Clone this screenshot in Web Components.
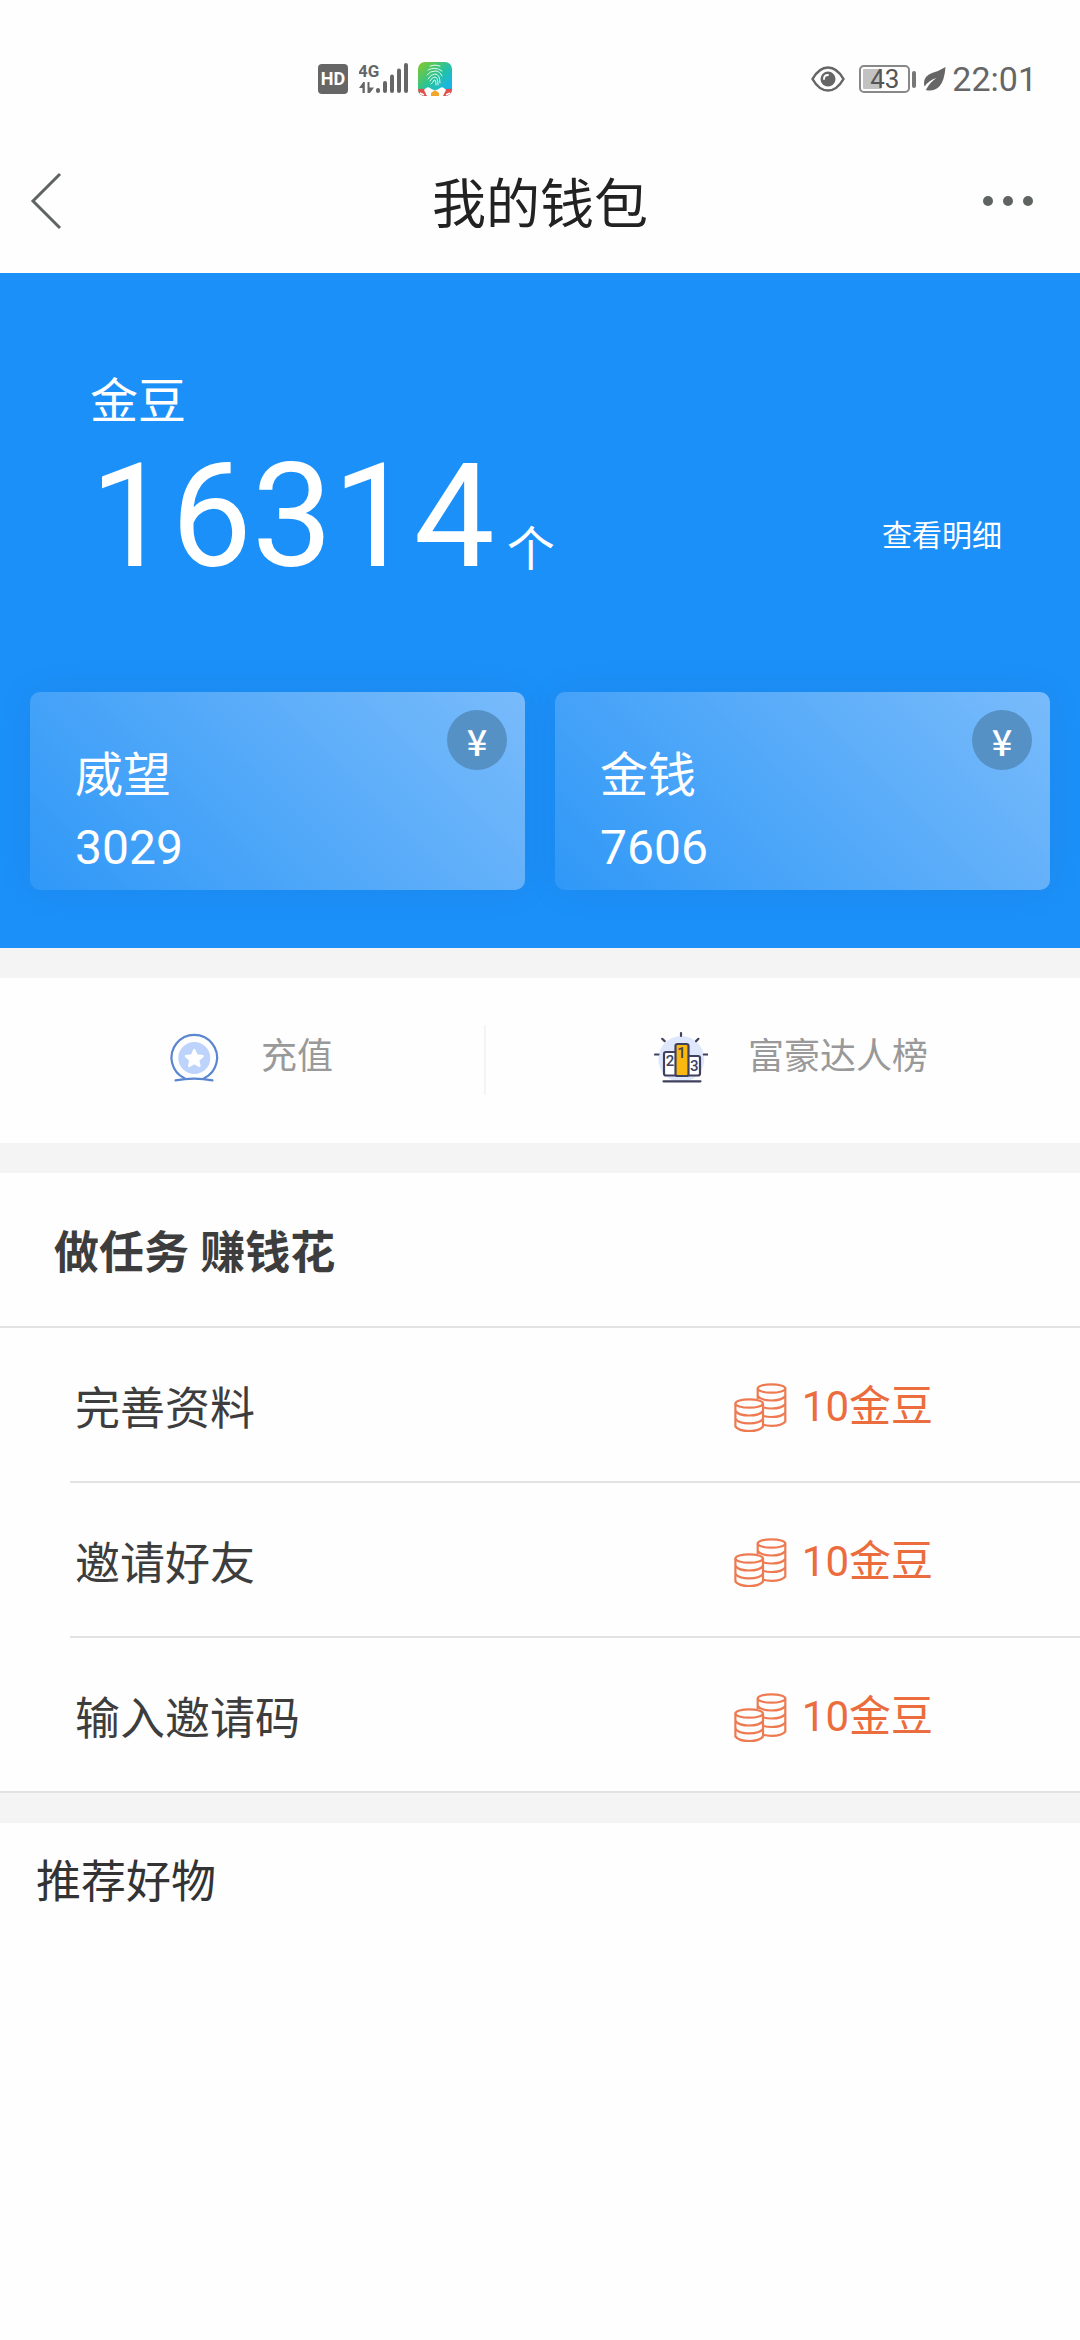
<!DOCTYPE html>
<html lang="zh-CN">
<head>
<meta charset="utf-8">
<meta name="viewport" content="width=device-width, initial-scale=1">
<title>我的钱包</title>
<style>
  body {
    margin: 0;
    background: #fefefe;
    color: #3d3d3d;
    font-family: Roboto, "Noto Sans CJK SC", sans-serif;
  }
</style>
</head>
<body>
<wallet-page>
  <status-bar time="22:01" battery="43"></status-bar>
  <nav-bar>我的钱包</nav-bar>

  <wallet-hero label="金豆" amount="16314" unit="个">
    <a slot="link" href="#detail">查看明细</a>
    <balance-card label="威望" value="3029"></balance-card>
    <balance-card label="金钱" value="7606"></balance-card>
  </wallet-hero>

  <quick-actions>
    <quick-action href="#recharge">
      <svg slot="icon" width="54" height="54" viewBox="0 0 54 54" fill="none" stroke="#5b86d0" stroke-width="2.2" stroke-linecap="round">
        <path d="M17.5 48.3A22.8 22.8 0 1 1 37.1 48.3"/>
        <path d="M8.5 50.3Q27.3 47 45.5 50.3"/>
        <circle cx="27.3" cy="28" r="16" fill="#bdd3fc" stroke="none"/>
        <path d="M27.3 20l2.5 5.4 5.9.7-4.4 4 1.2 5.9-5.2-2.9-5.2 2.9 1.2-5.9-4.4-4 5.9-.7z" fill="#fff" stroke="#fff" stroke-linejoin="round"/>
      </svg>
      充值
    </quick-action>
    <quick-action href="#rank">
      <svg slot="icon" width="54" height="54" viewBox="0 0 54 54" fill="none" stroke="#40415f" stroke-width="2.2" stroke-linecap="round">
        <circle cx="27.3" cy="29" r="23" fill="#dfe7fc" stroke="none"/>
        <rect x="10" y="22" width="14" height="23.5" rx="2" fill="#fff"/>
        <rect x="32" y="26" width="14" height="19.5" rx="2" fill="#fff"/>
        <rect x="21.5" y="14" width="13" height="32" rx="2" fill="#fbb80f"/>
        <path d="M9.5 51.3H46.5M27 3v3M8.2 8.8l2.5 2.3M44.4 8.8l-2.3 2.3M1 24.5h3.5M49.8 24.5h3.5"/>
        <g fill="#40415f" stroke="none" font-family="Roboto, sans-serif" font-weight="500" text-anchor="middle">
          <text x="16" y="36" font-size="15">2</text>
          <text x="27.5" y="28" font-size="15">1</text>
          <text x="40.3" y="41" font-size="15">3</text>
        </g>
      </svg>
      富豪达人榜
    </quick-action>
  </quick-actions>

  <task-list heading="做任务 赚钱花">
    <task-item reward="10金豆">完善资料</task-item>
    <task-item reward="10金豆">邀请好友</task-item>
    <task-item reward="10金豆">输入邀请码</task-item>
  </task-list>

  <goods-section>推荐好物</goods-section>
</wallet-page>

<script>
// clones the markup into an open shadow root
class BaseElement extends HTMLElement {
  constructor() {
    super();
    let template = document.createElement('template');
    template.innerHTML = this.render();
    this.attachShadow({mode: 'open'}).appendChild(template.content.cloneNode(true));
  }

  attr(name) {
    return this.getAttribute(name) || '';
  }
}

class WalletPage extends BaseElement {
  render() {
    return `
      <style>
      :host {
        display: flex;
        flex-direction: column;
        min-height: 100vh;
      }
      </style>
      <slot></slot>
    `;
  }
}

class StatusBar extends BaseElement {
  render() {
    return `
      <style>
      :host {
        display: flex;
        align-items: center;
        justify-content: space-between;
        height: 98px;
        padding: 30px 43px 0 318px;
        color: #666;
      }

      .group {
        display: flex;
        align-items: center;
      }

      .hd {
        width: 30px;
        border-radius: 4px;
        background: #666;
        color: #fff;
        font-size: 18px;
        font-weight: 700;
        line-height: 30px;
        text-align: center;
      }

      .signal {
        margin: 0 9px 0 11px;
      }

      .battery {
        box-sizing: border-box;
        width: 51px;
        height: 28px;
        margin: 0 2px 0 14px;
        padding: 2px;
        border: 2px solid #888;
        border-radius: 5px;
        background: linear-gradient(to right, #c2c2c2 ${this.attr('battery')}%, transparent 0) content-box;
        color: #555;
        font-size: 26px;
        line-height: 20px;
        text-align: center;
      }

      .tip {
        width: 4px;
        height: 17px;
        margin-right: 7px;
        border-radius: 2px;
        background: #777;
      }

      .time {
        margin-left: 6px;
        font-size: 34px;
        line-height: 40px;
      }
      </style>

      <div class="group">
        <span class="hd">HD</span>
        <svg class="signal" width="50" height="34" viewBox="0 0 50 34" fill="#666">
          <text x="-1" y="15" font-size="17" font-weight="700">4G</text>
          <path d="M0 26L4 20.5V20H5.8V31H3.5V26zM8.5 20h2v5.5H15L11 31H8.5z"/>
          <rect x="17" y="26" width="4" height="5" rx="2"/>
          <rect x="24" y="19" width="4" height="12" rx="2"/>
          <rect x="31" y="12.5" width="4" height="18.5" rx="2"/>
          <rect x="38" y="6.5" width="4" height="24.5" rx="2"/>
          <rect x="45" y="1" width="4" height="30" rx="2"/>
        </svg>
        <svg width="34" height="34" viewBox="0 0 34 34" fill="none">
          <defs>
            <linearGradient id="g" x1="0" y1="0" x2="1" y2="1">
              <stop offset=".1" stop-color="#74c83c"/>
              <stop offset=".5" stop-color="#25c2a0"/>
              <stop offset=".85" stop-color="#16b4ee"/>
            </linearGradient>
            <clipPath id="c"><rect width="34" height="34" rx="7"/></clipPath>
          </defs>
          <g clip-path="url(#c)">
            <rect width="34" height="34" fill="url(#g)"/>
            <path d="M0 27q5-1 9 1h16q5-2 9-1v7H0z" fill="#e2504b"/>
            <path d="M6 28q3-4 6-2 2 2 5 2t5-2q3-2 6 2l-3 6H9z" fill="#fff"/>
            <path d="M13 31l4-3 4 3v3h-8z" fill="#f4a62c"/>
            <path d="M2 31l4 2M32 31l-4 2" stroke="#fff" stroke-width="1.5"/>
            <g stroke="#dff8ef" stroke-linecap="round">
              <path d="M12 4q5-2 10 0M10 8q7-4 14 1M9 13q3-4 8-4 5 0 7 5M10 17q3-5 7-5 5 0 5 9M12 19q2-4 5-4 3 0 3 8M13 22q2-1 3-4 2-1 2 5"/>
            </g>
          </g>
        </svg>
      </div>

      <div class="group">
        <svg width="34" height="28" viewBox="0 0 34 28">
          <path d="M1.5 14Q8 2.5 17 2.5T32.5 14Q26 25.5 17 25.5T1.5 14z" fill="none" stroke="#666" stroke-width="2.5"/>
          <circle cx="17" cy="14" r="7.5" fill="#666"/>
          <path d="M13 14q0-4 4-4" fill="none" stroke="#fff" stroke-width="1.8" stroke-linecap="round"/>
        </svg>
        <span class="battery">${this.attr('battery')}</span>
        <span class="tip"></span>
        <svg width="23" height="26" viewBox="0 0 23 26">
          <path d="M22.5 1Q16 5 9 7 1 10 1 17q0 2 .7 3.5Q6 14 13.5 12 7 16 2.8 24q8 2 13.5-3.5Q21.5 15 22.5 1z" fill="#666"/>
        </svg>
        <span class="time">${this.attr('time')}</span>
      </div>
    `;
  }
}

class NavBar extends BaseElement {
  render() {
    return `
      <style>
      :host {
        display: grid;
        grid-template-columns: 120px 1fr 120px;
        align-items: center;
        height: 145px;
      }

      h1 {
        margin: 0;
        padding-top: 10px;
        color: #222;
        font-size: 54px;
        font-weight: 400;
        line-height: 72px;
        text-align: center;
      }

      button {
        display: flex;
        padding: 0 0 0 30px;
        border: 0;
        background: none;
      }

      button.more {
        justify-content: flex-end;
        padding: 0 46px 0 0;
      }
      </style>
      <button aria-label="返回">
        <svg width="32" height="58" viewBox="0 0 32 58" fill="none" stroke="#606460" stroke-width="3">
          <path d="M30 2L3 29l27 27"/>
        </svg>
      </button>
      <h1><slot></slot></h1>
      <button class="more" aria-label="更多">
        <svg width="52" height="12" viewBox="0 0 52 12" fill="#606460">
          <circle cx="6" cy="6" r="5"/>
          <circle cx="26" cy="6" r="5"/>
          <circle cx="46" cy="6" r="5"/>
        </svg>
      </button>
    `;
  }
}

class WalletHero extends BaseElement {
  render() {
    return `
      <style>
      :host {
        display: block;
        padding: 99px 30px 58px;
        background: #1c90f9;
        color: #fff;
      }

      .summary {
        display: flex;
        align-items: flex-end;
        justify-content: space-between;
        padding: 0 48px 0 60px;
      }

      .label {
        font-size: 48px;
        line-height: 60px;
      }

      .amount {
        padding-top: 10px;
        font-size: 144px;
        line-height: 150px;
      }

      .unit {
        margin-left: 12px;
        font-size: 48px;
        line-height: 60px;
      }

      ::slotted(a) {
        margin-bottom: 36px;
        color: inherit;
        font-size: 30px;
        line-height: 40px;
        text-decoration: none;
      }

      .cards {
        display: grid;
        grid-template-columns: 1fr 1fr;
        gap: 30px;
        margin-top: 100px;
      }
      </style>
      <div class="summary">
        <div>
          <div class="label">${this.attr('label')}</div>
          <div class="amount">${this.attr('amount')}<span class="unit">${this.attr('unit')}</span></div>
        </div>
        <slot name="link"></slot>
      </div>
      <div class="cards"><slot></slot></div>
    `;
  }
}

class BalanceCard extends BaseElement {
  render() {
    return `
      <style>
      :host {
        display: block;
        position: relative;
        padding: 48px 45px 6px;
        border-radius: 10px;
        background: linear-gradient(45deg, #2f98f7, #79bbfb);
        box-shadow: 0 0 40px rgba(0, 0, 0, .06);
        font-size: 48px;
        line-height: 72px;
      }

      .badge {
        position: absolute;
        top: 18px;
        right: 18px;
        width: 60px;
        border-radius: 50%;
        background: #5691c6;
        font-family: "Noto Sans CJK SC", sans-serif;
        font-size: 36px;
        font-weight: 500;
        line-height: 60px;
        text-align: center;
      }
      </style>
      <div>${this.attr('label')}</div>
      <div>${this.attr('value')}</div>
      <span class="badge">¥</span>
    `;
  }
}

class QuickActions extends BaseElement {
  render() {
    return `
      <style>
      :host {
        display: grid;
        grid-template-columns: 45fr 55fr;
        padding: 47px 0 48px;
        border: solid #f4f4f4;
        border-width: 30px 0;
      }

      ::slotted(:first-child) {
        border-right: 2px solid #f4f4f4;
      }
      </style>
      <slot></slot>
    `;
  }
}

class QuickAction extends BaseElement {
  render() {
    return `
      <style>
      :host {
        display: block;
      }

      a {
        display: flex;
        align-items: center;
        justify-content: center;
        gap: 40px;
        height: 64px;
        padding: 0 0 6px 16px;
        color: #999;
        font-size: 36px;
        line-height: 48px;
        text-decoration: none;
      }
      </style>
      <a href="${this.attr('href')}">
        <slot name="icon"></slot>
        <span><slot></slot></span>
      </a>
    `;
  }
}

class TaskList extends BaseElement {
  render() {
    return `
      <style>
      :host {
        display: block;
        border-bottom: 30px solid #f4f4f4;
      }

      h2 {
        margin: 0;
        padding: 45px 54px 36px;
        border-bottom: 2px solid #e2e2e2;
        font-size: 45px;
        font-weight: 700;
        line-height: 72px;
      }

      ::slotted(*) {
        margin-left: 70px;
      }

      /* the closing line runs the full width */
      ::slotted(:last-child) {
        margin-left: 0;
        padding-left: 75px;
      }
      </style>
      <h2>${this.attr('heading')}</h2>
      <slot></slot>
    `;
  }
}

class TaskItem extends BaseElement {
  render() {
    return `
      <style>
      :host {
        display: flex;
        align-items: center;
        justify-content: space-between;
        height: 153px;
        padding: 0 147px 0 5px;
        border-bottom: 2px solid #e2e2e2;
      }

      .name {
        padding-top: 10px;
        font-size: 45px;
        line-height: 72px;
      }

      .reward {
        display: flex;
        align-items: center;
        gap: 15px;
        padding-top: 4px;
        color: #eb6c3c;
        font-size: 42px;
        line-height: 60px;
      }
      </style>
      <span class="name"><slot></slot></span>
      <span class="reward">
        <svg width="54" height="54" viewBox="0 0 54 54" fill="none" stroke="#ee7a52" stroke-width="2.2">
          <ellipse cx="38.5" cy="8.5" rx="13.8" ry="4.2"/>
          <path d="M24.7 8.5V19M52.3 8.5V41.5Q49 45.8 38.5 45.8 34 45.8 30 44.8"/>
          <path d="M52.3 16Q49 20.5 38.5 20.5T24.7 16M52.3 24Q49 28.5 38.5 28.5 34 28.5 30.5 27.5M52.3 32.5Q49 37 38.5 37 34 37 30.5 36"/>
          <ellipse cx="16.2" cy="23.5" rx="13.8" ry="4.2"/>
          <path d="M2.4 23.5V46.5Q5.7 51 16.2 51T30 46.5V23.5"/>
          <path d="M2.4 31Q5.7 35.5 16.2 35.5T30 31M2.4 38.8Q5.7 43.3 16.2 43.3T30 38.8"/>
        </svg>
        ${this.attr('reward')}
      </span>
    `;
  }
}

class GoodsSection extends BaseElement {
  render() {
    return `
      <style>
      :host {
        display: block;
        padding: 24px 36px;
      }

      h2 {
        margin: 0;
        color: #333;
        font-size: 45px;
        font-weight: 400;
        line-height: 72px;
      }
      </style>
      <h2><slot></slot></h2>
    `;
  }
}

customElements.define('wallet-page', WalletPage);
customElements.define('status-bar', StatusBar);
customElements.define('nav-bar', NavBar);
customElements.define('wallet-hero', WalletHero);
customElements.define('balance-card', BalanceCard);
customElements.define('quick-actions', QuickActions);
customElements.define('quick-action', QuickAction);
customElements.define('task-list', TaskList);
customElements.define('task-item', TaskItem);
customElements.define('goods-section', GoodsSection);
</script>
</body>
</html>
